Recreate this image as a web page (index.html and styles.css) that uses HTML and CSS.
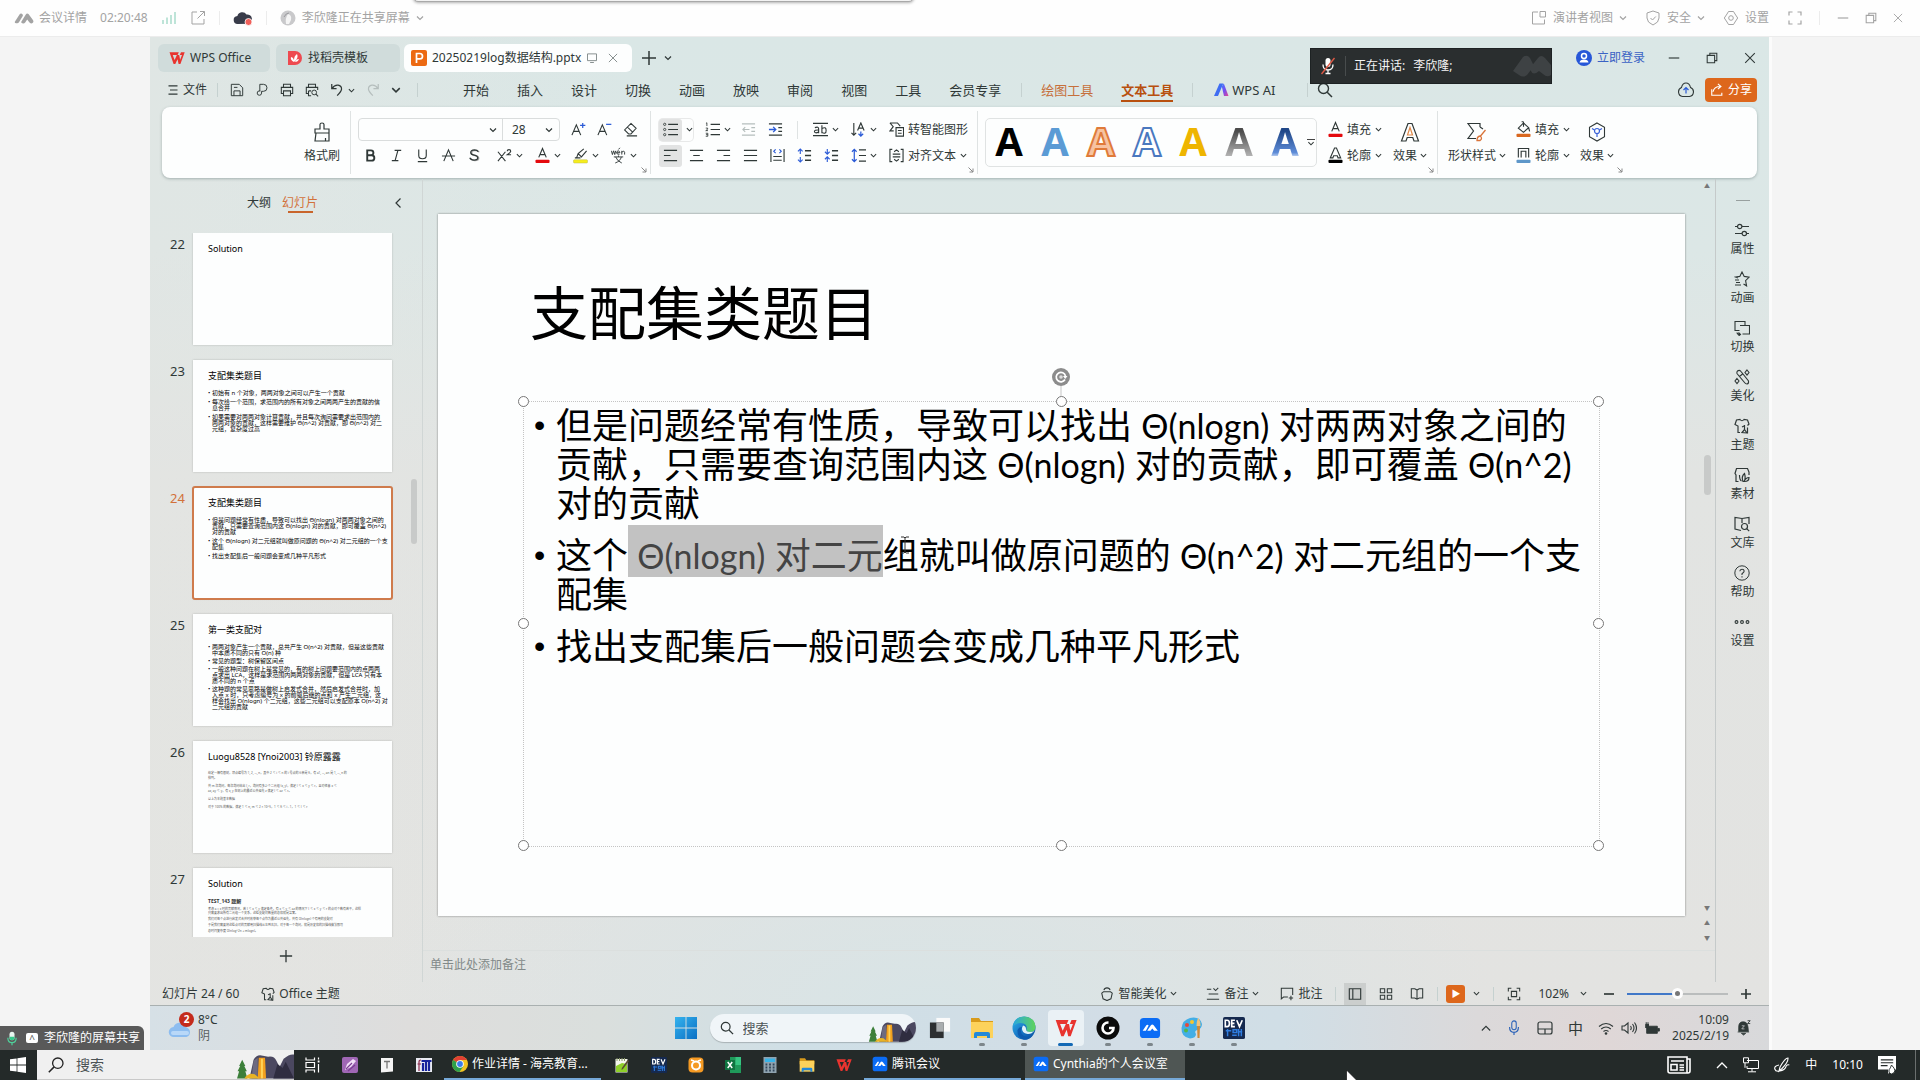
FILE: index.html
```html
<!DOCTYPE html>
<html lang="zh-CN">
<head>
  <meta charset="UTF-8">
  <meta name="viewport" content="width=device-width, initial-scale=1.0">
  <title>会议详情</title>
  <link rel="stylesheet" href="styles.css">
</head>
<body>

<!-- Icon sprite -->
<svg class="sprite" aria-hidden="true">
  <defs>
    <linearGradient id="g-edge" x1="0" y1="0" x2="1" y2="1"><stop offset="0" stop-color="#2fb4e8"/><stop offset=".5" stop-color="#1878c8"/><stop offset="1" stop-color="#0b4f9e"/></linearGradient>
    <linearGradient id="g-edge2" x1="0" y1="0" x2="1" y2="0"><stop offset="0" stop-color="#2aa7df"/><stop offset="1" stop-color="#5fd45a"/></linearGradient>
    <linearGradient id="g-ai" x1="0" y1="0" x2="1" y2="1"><stop offset="0" stop-color="#3b7bff"/><stop offset=".5" stop-color="#7a4cf0"/><stop offset="1" stop-color="#e5488e"/></linearGradient>
    <linearGradient id="g-win" x1="0" y1="0" x2="1" y2="1"><stop offset="0" stop-color="#35b3ee"/><stop offset="1" stop-color="#0a6fc4"/></linearGradient>
  </defs>
  <symbol id="chev" viewBox="0 0 8 8"><path d="M1 2.500l3 3 3-3" fill="none" stroke="currentColor" stroke-width="1.200"/></symbol>
  <symbol id="chev-left" viewBox="0 0 12 12"><path d="M8.500 1.500L4 6l4.500 4.500" fill="none" stroke="currentColor" stroke-width="1.200"/></symbol>
  <symbol id="chev-up" viewBox="0 0 12 8"><path d="M1 7l5-5 5 5" fill="none" stroke="currentColor" stroke-width="1.300"/></symbol>
  <symbol id="corner" viewBox="0 0 6 6"><path d="M.5.5L5 5M5 1.500V5H1.500" fill="none" stroke="currentColor"/></symbol>
  <symbol id="minus" viewBox="0 0 16 16"><path d="M2 8h12" stroke="currentColor" stroke-width="1.300"/></symbol>
  <symbol id="minus-b" viewBox="0 0 12 12"><path d="M0 6h12" stroke="currentColor" stroke-width="2"/></symbol>
  <symbol id="plus-b" viewBox="0 0 12 12"><path d="M0 6h12M6 0v12" stroke="currentColor" stroke-width="2"/></symbol>
  <symbol id="restore" viewBox="0 0 16 16"><path d="M2.500 5h8.500v8.500H2.500zM5.500 5V2.500h8V11H11" fill="none" stroke="currentColor" stroke-width="1.200"/></symbol>
  <symbol id="close" viewBox="0 0 16 16"><path d="M2.500 2.500l11 11M13.500 2.500l-11 11" stroke="currentColor" stroke-width="1.200"/></symbol>
  <symbol id="plus" viewBox="0 0 16 16"><path d="M8 1v14M1 8h14" stroke="currentColor" stroke-width="1.500"/></symbol>
  <symbol id="search" viewBox="0 0 16 16"><circle cx="6.500" cy="6.500" r="5" fill="none" stroke="currentColor" stroke-width="1.400"/><path d="M10.200 10.200L15 15" stroke="currentColor" stroke-width="1.500"/></symbol>
  <symbol id="search-l" viewBox="0 0 16 16"><circle cx="9.800" cy="6.200" r="5.200" fill="none" stroke="currentColor" stroke-width="1.300"/><path d="M6.100 9.900L.8 15.200" stroke="currentColor" stroke-width="1.500"/></symbol>

  <symbol id="meet" viewBox="0 0 20 14"><path d="M1 10.500l4.500-7q1-1.600 2.400-.8 1.600 1 .7 2.600L5 11.300Q4 12.800 2.200 12.200.2 11.800 1 10.500zM7.300 10.800l4.500-7.300q1-1.500 2.700-.5l4.600 6.300q1 2.200-1 3-2 .5-3-1.200l-1.900-2.700-2 3q-1.100 1.600-2.800.9-1.600-.7-1.100-1.500z" fill="currentColor"/></symbol>
  <symbol id="meet-solid" viewBox="0 0 40 28"><path d="M2 19L12 5q4-3 7 1l4 8-7 9q-4 3-8 0zM19 16L27 6q3-4 7 0l6 7v10q-4 3-8-1l-4-3q-6 5-8 0z" fill="currentColor"/></symbol>
  <symbol id="signal" viewBox="0 0 16 16"><path d="M2 10v4M6 7.500V14M10 5v9M14 2v12" stroke="#a9dccb" stroke-width="1.500"/></symbol>
  <symbol id="openout" viewBox="0 0 16 16"><path d="M7 2H2v12h12V9M10 1.500h4.500V6M14.300 1.700L7.500 8.500" fill="none" stroke="currentColor"/></symbol>
  <symbol id="cloudrec" viewBox="0 0 20 16"><path d="M5 14a4 4 0 0 1-.6-8A5 5 0 0 1 13.500 4.500 4.500 4.500 0 0 1 15 13.800z" fill="#383b49"/><circle cx="15.500" cy="12" r="3.500" fill="#f0605a" stroke="#fff" stroke-width=".8"/></symbol>
  <symbol id="avatar-g" viewBox="0 0 16 16"><circle cx="8" cy="8" r="7.500" fill="#c9c9cb"/><path d="M6 14q-1-6 2-10 4 1 3 6l-2 4z" fill="#f5f5f5"/><path d="M4 7q2-4 5-4" stroke="#9a9a9e" fill="none"/></symbol>
  <symbol id="speaker-view" viewBox="0 0 16 16"><path d="M7 2H1.500v12h12V9.500M9 1.500h5.500v5.500H9z" fill="none" stroke="currentColor"/></symbol>
  <symbol id="shield" viewBox="0 0 16 16"><path d="M8 1l6 2v5q0 4.500-6 7-6-2.500-6-7V3z" fill="none" stroke="currentColor"/><path d="M5.500 8L7.500 10l3.300-3.500" fill="none" stroke="currentColor"/></symbol>
  <symbol id="gear" viewBox="0 0 16 16"><path d="M5.500 1.500h5L12 4l2.700 4L12 12l-1.500 2.500h-5L4 12 1.300 8 4 4z" fill="none" stroke="currentColor" stroke-linejoin="round"/><circle cx="8" cy="8" r="2.300" fill="none" stroke="currentColor"/></symbol>
  <symbol id="full" viewBox="0 0 16 16"><path d="M2 5.500V2h3.500M10.500 2H14v3.500M14 10.500V14h-3.500M5.500 14H2v-3.500" fill="none" stroke="currentColor" stroke-width="1.200"/></symbol>

  <symbol id="wps" viewBox="0 0 16 14"><path d="M.5 1.200h9.300L8.600 4.100H3.700L5.600 9l2.300-5h2.300l.9 4.800L13 4.100h-2.200l1.200-2.900h3.700L11.400 13H9.600L8.500 8.300 6.300 13H4.600z" fill="#e8342f"/></symbol>
  <symbol id="docer" viewBox="0 0 16 16"><path d="M1 1h7a7 7 0 0 1 0 14H1z" fill="#ee4a50"/><path d="M7 12q-4-2-3-5 2 0 3 3 0-4 3-6 2 4-3 8zm1 0q1-3 4-3-1 3-4 3z" fill="#fff"/></symbol>
  <symbol id="ppt" viewBox="0 0 16 16"><rect width="16" height="16" rx="2" fill="#ec6a13"/><path d="M5.500 13V3.500h3.300a2.700 2.700 0 0 1 0 5.400H5.500" fill="none" stroke="#fff" stroke-width="1.700"/></symbol>
  <symbol id="monitor" viewBox="0 0 16 16"><path d="M2 2.500h12v9H2zM5.500 14h5" fill="none" stroke="currentColor" stroke-width="1.200"/></symbol>
  <symbol id="menu" viewBox="0 0 16 16"><path d="M2 2.500h12M4 8h10M2 13.500h12" stroke="currentColor" stroke-width="1.500"/></symbol>
  <symbol id="save" viewBox="0 0 16 16"><path d="M1.500 1.500h9l4 4v9h-13zM4.500 14.500V9h7v5.500M4.500 5h4" fill="none" stroke="currentColor" stroke-width="1.100"/></symbol>
  <symbol id="export" viewBox="0 0 16 16"><path d="M5.500 9.500V1.500h4.200a4 4 0 0 1 0 8H7.500v2a2.500 2.500 0 1 1-2.500-2.500h1" fill="none" stroke="currentColor" stroke-width="1.100"/></symbol>
  <symbol id="print" viewBox="0 0 16 16"><path d="M4 5V1.500h8V5M4 12H1.500V5h13v7H12M4 9h8v5.500H4z" fill="none" stroke="currentColor" stroke-width="1.200"/></symbol>
  <symbol id="preview" viewBox="0 0 16 16"><path d="M4 5V1.500h8V5M4 12H1.500V5h13v3M4 9h3M4 9v5.500h3" fill="none" stroke="currentColor" stroke-width="1.200"/><circle cx="10.500" cy="10.800" r="2.700" fill="none" stroke="currentColor" stroke-width="1.100"/><path d="M12.500 12.800l2.500 2.500" stroke="currentColor" stroke-width="1.200"/></symbol>
  <symbol id="undo" viewBox="0 0 16 16"><path d="M2 1v5.500h5.500M2.500 6.200Q5 2 9.300 2.500q4 .8 3.900 4.500-.2 2.500-5 7.500" fill="none" stroke="currentColor" stroke-width="1.400"/></symbol>
  <symbol id="redo" viewBox="0 0 16 16"><path d="M14 1v5.500H8.500M13.500 6.200Q11 2 6.700 2.500q-4 .8-3.900 4.500.2 2.500 5 7.500" fill="none" stroke="currentColor" stroke-width="1.400"/></symbol>
  <symbol id="ai" viewBox="0 0 16 16"><path d="M6.500 1.500h3.800L5 14H1z" fill="#3f6df2"/><path d="M8.800 4.500l2-3 4.700 12.500H11z" fill="url(#g-ai)"/></symbol>
  <symbol id="cloudup" viewBox="0 0 16 16"><path d="M3.500 5.500Q4.500 1 8 1t4.500 4.500a4.700 4.700 0 0 1-1 9h-7a4.700 4.700 0 0 1-1-9z" fill="none" stroke="currentColor" stroke-width="1.100"/><path d="M8 11.500V5.500M5.500 8L8 5.500 10.500 8" fill="none" stroke="#2b5bd7" stroke-width="1.200"/></symbol>
  <symbol id="share" viewBox="0 0 16 16"><path d="M2 7v7h11.500v-3M3.500 10q1-6 8-6M9 1l3.500 3L9 7" fill="none" stroke="currentColor" stroke-width="1.300"/></symbol>
  <symbol id="user" viewBox="0 0 16 16"><circle cx="8" cy="8" r="8" fill="#2757d8"/><circle cx="8" cy="6" r="2.500" fill="none" stroke="#fff" stroke-width="1.500"/><path d="M3.500 12.500Q4 9.500 8 9.500t4.500 3z" fill="#fff"/></symbol>
  <symbol id="cube" viewBox="0 0 18 20"><path d="M9 1l7.500 4.300v9.400L9 19l-7.500-4.300V5.300z" fill="none" stroke="currentColor" stroke-width="1.100"/><circle cx="9" cy="9" r="2.500" fill="none" stroke="#3a62d8" stroke-width="1.200"/><path d="M9 11.500V15M6.500 8L4 6.500M11.500 8L14 6.500" stroke="#3a62d8" stroke-width="1.200"/></symbol>
  <symbol id="micoff" viewBox="0 0 16 18"><rect x="5.500" y="1" width="5" height="9" rx="2.500" fill="#fff"/><path d="M3 7.500Q3 13 8 13t5-5.500M8 13v3.500M5.500 16.500h5" fill="none" stroke="#fff" stroke-width="1.300"/><path d="M14.500 1L1.500 17" stroke="#e05a46" stroke-width="1.300"/></symbol>

  <symbol id="painter" viewBox="0 0 20 20"><path d="M8 7V2.500q0-1.500 2-1.500t2 1.500V7h5v4H3V7zM4 11l-1 8h14V11M13.500 19v-3" fill="none" stroke="currentColor" stroke-width="1.200"/></symbol>
  <symbol id="a-plus" viewBox="0 0 16 16"><path d="M1 14L5.700 3 10.400 14M2.700 10h6" fill="none" stroke="currentColor" stroke-width="1.200"/><path d="M12.500 1v5.500M9.700 3.700h5.600" stroke="#2b5bd7" stroke-width="1.300"/></symbol>
  <symbol id="a-minus" viewBox="0 0 16 16"><path d="M1 14L5.700 3 10.400 14M2.700 10h6" fill="none" stroke="currentColor" stroke-width="1.200"/><path d="M9.700 2.500h5.600" stroke="#2b5bd7" stroke-width="1.300"/></symbol>
  <symbol id="eraser" viewBox="0 0 16 16"><path d="M8.500 1.500l5.500 5.200-5.500 6H6L1.700 8.500zM4 14.800h11M4.800 5.500L10 10.500" fill="none" stroke="currentColor" stroke-width="1.100"/></symbol>
  <symbol id="t-bold" viewBox="0 0 16 16"><path d="M4.500 2.500h4a2.600 2.600 0 0 1 0 5.200h-4zM4.500 7.700h4.700a2.900 2.900 0 0 1 0 5.800H4.500z" fill="none" stroke="currentColor" stroke-width="2"/></symbol>
  <symbol id="t-italic" viewBox="0 0 16 16"><path d="M6 2.500h7M3 13.500h7M9.500 2.500l-3 11" fill="none" stroke="currentColor" stroke-width="1.200"/></symbol>
  <symbol id="t-under" viewBox="0 0 16 16"><path d="M4 1.500V8q0 3.500 4 3.500T12 8V1.500M3 14.500h10" fill="none" stroke="currentColor" stroke-width="1.200"/></symbol>
  <symbol id="t-strike" viewBox="0 0 16 16"><path d="M3 14L8 2l5 12M1 8.500h14" fill="none" stroke="currentColor" stroke-width="1.200"/></symbol>
  <symbol id="t-shadow" viewBox="0 0 16 16"><path d="M13 4.500Q12 2.500 9 2.500 5 2.700 5 5.200 5 7.500 8.700 8T12.500 11q0 2.500-4 2.500Q5 13.500 4 11" fill="none" stroke="#aaa" stroke-width="1.500"/><path d="M12 4Q11 2 8 2 4 2.200 4 4.700 4 7 7.700 7.500T11.500 10.500q0 2.500-4 2.500Q4 13 3 10.500" fill="none" stroke="currentColor" stroke-width="1.400"/></symbol>
  <symbol id="t-super" viewBox="0 0 16 16"><path d="M1 4l8 10M9 4L1 14M11 3.500q0-1.800 1.800-1.800t1.800 1.700q0 1.200-3.600 3.800H15" fill="none" stroke="currentColor" stroke-width="1.200"/></symbol>
  <symbol id="t-color" viewBox="0 0 16 18"><path d="M4 11L8 1.500l4 9.500M5.200 8h5.600" fill="none" stroke="currentColor" stroke-width="1.200"/><rect x=".5" y="13.500" width="15" height="3.500" rx="1" fill="#e40a0e"/></symbol>
  <symbol id="t-outline" viewBox="0 0 16 18"><path d="M2.500 11.500L7 1h2l4.500 10.500h-2.800l-.8-2.200H6l-.8 2.200z" fill="none" stroke="currentColor" stroke-width="1.200"/><rect x=".5" y="13.500" width="15" height="3.500" rx="1" fill="#000"/></symbol>
  <symbol id="t-hl" viewBox="0 0 16 18"><path d="M4 11l1.500-4 6-5M5.500 7L9 10.500 14.500 4M2 11.500h6" fill="none" stroke="currentColor" stroke-width="1.200"/><rect x=".5" y="13.500" width="15" height="3.500" rx="1" fill="#f6ee1c" stroke="#b9b34a" stroke-width=".5"/></symbol>
  <symbol id="t-wen" viewBox="0 0 16 18"><path d="M.5 4l1 4 1.300-4L4 8l1-4M6 6h3.500Q9 4 7.700 4 6 4.200 6 6.200 6.200 8 9 7.700M11.500 8V4M11.500 5.500q2.500-2.500 3 0V8M8 2.500L9.500.8M3 10.500h10M8 9v1.500M4.500 17Q10 15 11 10.500M5 10.500Q6.500 15 11.500 17" fill="none" stroke="currentColor"/></symbol>
  <symbol id="list-b" viewBox="0 0 16 16"><path d="M5.500 2.500H16M5.500 8H16M5.500 13.500H16" stroke="currentColor" stroke-width="1.200"/><g fill="none" stroke="currentColor" stroke-width=".9"><circle cx="1.800" cy="2.500" r="1.200"/><circle cx="1.800" cy="8" r="1.200"/><circle cx="1.800" cy="13.500" r="1.200"/></g></symbol>
  <symbol id="list-n" viewBox="0 0 16 16"><path d="M6 2.500h10M6 8h10M6 13.500h10" stroke="currentColor" stroke-width="1.200"/><path d="M1 1.500L2 .8v3.500M.8 6.500h2v1.200l-2 1.500h2.400M.8 12h2.200v3.200H.8M1 13.500h2" fill="none" stroke="currentColor" stroke-width=".9"/></symbol>
  <symbol id="outdent" viewBox="0 0 16 16"><path d="M1 2h14M11 6h4M11 10h4M1 14h14" stroke="currentColor" stroke-width="1.100"/><path d="M9 8H2M4.500 5.500L2 8l2.500 2.500" fill="none" stroke="currentColor" stroke-width="1.200"/></symbol>
  <symbol id="indent" viewBox="0 0 16 16"><path d="M1 2h14M11 6h4M11 10h4M1 14h14" stroke="currentColor" stroke-width="1.200"/><path d="M1 8h7M5.500 5.200L8.300 8l-2.800 2.800" fill="none" stroke="#2b5bd7" stroke-width="1.400"/></symbol>
  <symbol id="ab" viewBox="0 0 16 16"><path d="M0 1.500h16M0 14.500h16M2 6q4-1.500 4 1.300V12M6 8.500Q1.500 8.300 1.500 10.300 2 12.500 6 10.800M9.500 3.500V12M9.500 7q4.500-2.500 4.500 2t-4.500 2.300" fill="none" stroke="currentColor" stroke-width="1.200"/></symbol>
  <symbol id="dir" viewBox="0 0 16 16"><path d="M3 1v13M.5 11.500L3 14l2.500-2.500M7 9l3.500-8L14 9M8 6.500h5" fill="none" stroke="currentColor" stroke-width="1.200"/><path d="M10.500 10v5M8 12.500l2.500 2.500 2.500-2.500" fill="none" stroke="#2b5bd7" stroke-width="1.300"/></symbol>
  <symbol id="smart" viewBox="0 0 16 16"><path d="M1 1h8l3 3.500M1 1l3.500 4L1 9.500h4M7.500 6h8v9h-8zM9.500 9h4M9.500 12h4" fill="none" stroke="currentColor" stroke-width="1.200"/></symbol>
  <symbol id="al" viewBox="0 0 16 16"><path d="M1 2.500h14M1 8h7M1 13.500h14" stroke="currentColor" stroke-width="1.200"/></symbol>
  <symbol id="ac" viewBox="0 0 16 16"><path d="M1 2.500h14M4.500 8h7M1 13.500h14" stroke="currentColor" stroke-width="1.200"/></symbol>
  <symbol id="ar" viewBox="0 0 16 16"><path d="M1 2.500h14M8 8h7M1 13.500h14" stroke="currentColor" stroke-width="1.200"/></symbol>
  <symbol id="aj" viewBox="0 0 16 16"><path d="M1 2.500h14M1 8h14M1 13.500h14" stroke="currentColor" stroke-width="1.200"/></symbol>
  <symbol id="dist" viewBox="0 0 16 16"><path d="M1 1v14M15 1v14M3.500 9h9M3.500 13h9" stroke="currentColor" stroke-width="1.200"/><path d="M6 1.500L4 3.500l2 2M10 1.500l2 2-2 2" fill="none" stroke="#2b5bd7" stroke-width="1.200"/></symbol>
  <symbol id="sp-up" viewBox="0 0 16 16"><path d="M8.500 3H15M8.500 8H15M8.500 13H15" stroke="currentColor" stroke-width="1.500"/><path d="M3.500 1.500v5M1 3.500L3.500 1 6 3.500M3.500 9.500v5M1 12.500L3.500 15 6 12.500" fill="none" stroke="#2b5bd7" stroke-width="1.200"/></symbol>
  <symbol id="sp-dn" viewBox="0 0 16 16"><path d="M8.500 3H15M8.500 8H15M8.500 13H15" stroke="currentColor" stroke-width="1.500"/><path d="M3.500 1v5M1 4l2.500 2.500L6 4M3.500 15v-5M1 12l2.500-2.500L6 12" fill="none" stroke="#2b5bd7" stroke-width="1.200"/></symbol>
  <symbol id="sp" viewBox="0 0 16 16"><path d="M8.500 2H16M8.500 8H16M8.500 14H16" stroke="currentColor" stroke-width="1.200"/><path d="M3.500 1.500v13M1 4l2.500-2.500L6 4M1 12l2.500 2.500L6 12" fill="none" stroke="#2b5bd7" stroke-width="1.300"/></symbol>
  <symbol id="valign" viewBox="0 0 16 16"><path d="M3.500 1.500H1v13h2.500M12.500 1.500H15v13h-2.500M4 6.500h8M4 9.500h8M5.500 4L8 2l2.500 2M5.500 12L8 14l2.500-2" fill="none" stroke="currentColor" stroke-width="1.200"/></symbol>
  <symbol id="fx-a" viewBox="0 0 20 20"><path d="M1.500 19L8 1.500h4L18.500 19H14l-1.200-3.500H7.200L6 19z" fill="none" stroke="currentColor" stroke-width="1.200"/><path d="M7.500 13L10 5.500l2.500 7.500z" fill="none" stroke="#e08a4a" stroke-width="1.200"/></symbol>
  <symbol id="shape-style" viewBox="0 0 20 20"><path d="M9 16.500H1L6.500 9 1 1.500h12V5M13 5l3 2" fill="none" stroke="currentColor" stroke-width="1.200"/><path d="M18.500 8l-5 6M10 18.500q0-4 3-4.500 3 2 0 4.500z" fill="none" stroke="#d9743a" stroke-width="1.300"/></symbol>
  <symbol id="bucket" viewBox="0 0 16 18"><path d="M8 2l5.500 5L8 12 2.500 7.500zM8 6V1.500Q8 .5 6 .7M13.500 7l1 4" fill="none" stroke="currentColor" stroke-width="1.200"/><rect x=".5" y="13.500" width="15" height="3.500" rx="1" fill="#d9671f"/></symbol>
  <symbol id="shape-line" viewBox="0 0 16 18"><path d="M2.500 11V1.500h11V11M5.500 11V4.500h5V11" fill="none" stroke="currentColor" stroke-width="1.200"/><rect x=".5" y="13.500" width="15" height="3.500" rx="1" fill="#5e97c9"/></symbol>

  <symbol id="s-prop" viewBox="0 0 16 16"><path d="M1 4.500h2.500M8 4.500h7M1 11.500h7M12.500 11.500H15" stroke="currentColor" stroke-width="1.200"/><circle cx="5.700" cy="4.500" r="2.200" fill="none" stroke="currentColor" stroke-width="1.200"/><circle cx="10.300" cy="11.500" r="2.200" fill="none" stroke="currentColor" stroke-width="1.200"/></symbol>
  <symbol id="s-anim" viewBox="0 0 16 16"><path d="M4 7L1.500 6l4.300-.6L8 1l2.200 4.400 5 .7-3.600 3.500 1 5.200L9.500 13M1 9h4M2 11.500h4M1 14h6" fill="none" stroke="currentColor" stroke-width="1.100"/></symbol>
  <symbol id="s-trans" viewBox="0 0 16 16"><path d="M5.500 10.500H1V1.500h10v3.500M6 5.500h9.500v8.500H8.500M3 12.500q0 2 3 2M4.500 12.500l2 2-2 1.500" fill="none" stroke="currentColor" stroke-width="1.100"/></symbol>
  <symbol id="s-wand" viewBox="0 0 16 16"><path d="M3.500 2Q5.500.5 7 2.500l7.500 9.500q.5 2.500-1.500 3-1.500 0-2.500-1.500L3 4.500Q2.500 3 3.500 2zM5.500 7.500L8.500 5" fill="none" stroke="currentColor" stroke-width="1.100"/><path d="M13 1l2 2.500-2 2.500-2-2.500zM3 9.500L5 12l-2 2.500L1 12z" fill="none" stroke="currentColor" stroke-width="1.100"/></symbol>
  <symbol id="s-theme" viewBox="0 0 16 16"><path d="M6 14.500H4V8L1 6.500 2.500 2 6 1.500q2 2.500 4 0L13.500 2 15 6l-1.500 1.500M10.500 7v5M8 9l2-1M13 15l-5-.5 2.500-3z" fill="none" stroke="currentColor" stroke-width="1.200"/><path d="M13.500 9.500v5.500" stroke="currentColor" stroke-width="1.200"/></symbol>
  <symbol id="s-mat" viewBox="0 0 16 16"><path d="M4.500 14.500H2V8L1 6.500 2.500 1.500h11L15 5v3M5.500 8q0 5 2 6M9 14.500q-2-5 1.500-8 1.500 5-.5 8q2-4 5-4 0 4-4.500 4z" fill="none" stroke="currentColor" stroke-width="1.200"/></symbol>
  <symbol id="s-lib" viewBox="0 0 16 16"><path d="M7 14.500L1 13V1.500l7 1 7-1V8M8 2.500V7" fill="none" stroke="currentColor" stroke-width="1.200"/><circle cx="10.500" cy="10.500" r="3" fill="none" stroke="currentColor" stroke-width="1.200"/><path d="M12.700 12.700l2.500 2.500" stroke="currentColor" stroke-width="1.200"/></symbol>
  <symbol id="s-help" viewBox="0 0 16 16"><circle cx="8" cy="8" r="7.200" fill="none" stroke="currentColor"/><path d="M5.800 6.300Q6 4.200 8 4.200t2.200 1.900Q10.200 7.200 8 8.700V10M8 11.200v1.300" fill="none" stroke="currentColor" stroke-width="1.100"/></symbol>
  <symbol id="s-more" viewBox="0 0 16 16"><g fill="none" stroke="currentColor" stroke-width="1.100"><circle cx="2.500" cy="8" r="1.400"/><circle cx="8" cy="8" r="1.400"/><circle cx="13.500" cy="8" r="1.400"/></g></symbol>

  <symbol id="b-smart" viewBox="0 0 16 16"><path d="M4 5.500h8l2 1.500-1.500 6.500-4.500 2-4.500-2L2 7zM4.500 3.500Q5 1 8 1t3.500 2.500" fill="none" stroke="currentColor" stroke-width="1.200"/></symbol>
  <symbol id="b-note" viewBox="0 0 16 16"><path d="M1 2.500h5M3 8h11M1 14h14M8.500 1.500l2.500 2.500 3-3" fill="none" stroke="currentColor" stroke-width="1.200"/></symbol>
  <symbol id="b-comment" viewBox="0 0 16 16"><path d="M14.500 9V1.500h-13v12L4 11.500h5M12.500 10v5M10 12.500h5" fill="none" stroke="currentColor" stroke-width="1.200"/></symbol>
  <symbol id="v-normal" viewBox="0 0 16 16"><path d="M1.500 2h13v12h-13zM5.500 2v12" fill="none" stroke="currentColor" stroke-width="1.300"/></symbol>
  <symbol id="v-grid" viewBox="0 0 16 16"><path d="M1.500 2h5v4.500h-5zM9.500 2h5v4.500h-5zM1.500 9.500h5V14h-5zM9.500 9.500h5V14h-5z" fill="none" stroke="currentColor" stroke-width="1.200"/></symbol>
  <symbol id="v-read" viewBox="0 0 16 16"><path d="M8 3.500L5.500 2h-4v10.500h4L8 14l2.500-1.500h4V2h-4zV14" fill="none" stroke="currentColor" stroke-width="1.200"/></symbol>
  <symbol id="v-fit" viewBox="0 0 16 16"><path d="M1.500 5V1.500H5M11 1.500h3.500V5M14.500 11v3.500H11M5 14.500H1.500V11M5 5h6v6H5z" fill="none" stroke="currentColor" stroke-width="1.200"/></symbol>

  <symbol id="weather" viewBox="0 0 24 18"><path d="M6 17a5 5 0 0 1-.5-10A7 7 0 0 1 18.500 7.500 5 5 0 0 1 18.500 17z" fill="#8dbdf0"/><path d="M5 13h14" stroke="#b9d8f8" stroke-width="4" stroke-linecap="round"/></symbol>
  <symbol id="win11" viewBox="0 0 24 24"><path d="M0 0h11.500v11.500H0zM12.500 0H24v11.500H12.500zM0 12.500h11.500V24H0zM12.500 12.500H24V24H12.500z" fill="url(#g-win)"/></symbol>
  <symbol id="scene" viewBox="0 0 56 24"><path d="M13 24L17 6q3-6 9-4l5 1q6-1 8 4l3 6 4-8q6-5 10-4v23z" fill="#4b4860"/><path d="M36 24l4-14 5 4 3-6 8 16z" fill="#2f2d40"/><path d="M17 7l4-3v20h-6z" fill="#6d6a80"/><path d="M22 4h6l1 20h-8z" fill="#f2a01e"/><path d="M24 5h2v19h-2z" fill="#ffd257"/><path d="M1 24l2-7H1.500L4 12H3l3-6 3 6H8l2.500 5H9l2 7z" fill="#3c7f3a"/><path d="M8 24q4-6 10-4l5 4z" fill="#e8b326"/></symbol>
  <symbol id="tv11" viewBox="0 0 24 24"><path d="M8 1h15v15H8z" fill="#fafafa"/><path d="M1 6h15v17H1z" fill="#2c2f31"/><path d="M8 6h8v10H8z" fill="#a9adaf"/></symbol>
  <symbol id="folder" viewBox="0 0 24 24"><path d="M1 2h8l2 3h12v6H1z" fill="#d89b1c"/><path d="M1 6h22v16H1z" fill="#fdd25b"/><path d="M4 22v-4q0-2 2-2h12q2 0 2 2v4h-3v-2H7v2z" fill="#2489d8"/></symbol>
  <symbol id="edge" viewBox="0 0 24 24"><circle cx="12" cy="12" r="11.500" fill="url(#g-edge)"/><path d="M1 10Q3 .5 12.500.5 23 1.500 23.500 11q0 5-5.500 5-4 0-3.500-3 1-4-3-5.500Q6 6 1 10z" fill="url(#g-edge2)"/><path d="M10 11q-3 6 2 9 5 2 9-1-4 6-10 4.500Q5 21 5.500 14 7 10.500 10 11z" fill="#0d5cb0"/><path d="M11 9.500q3 .5 3 3.500 0 3 4 3 3 0 4.500-1.500-3 4-7 3.500-6-1-5.500-6z" fill="#dff1f8"/></symbol>
  <symbol id="logi" viewBox="0 0 24 24"><circle cx="12" cy="12" r="11.500" fill="#0b0b0b"/><path d="M12.500 6.500H12a5.500 5.500 0 1 0 5.500 5.500H13" fill="none" stroke="#fff" stroke-width="2.600"/></symbol>
  <symbol id="tmeet" viewBox="0 0 24 24"><rect x="1" y="1" width="22" height="22" rx="4" fill="#0b6cf5"/><path d="M4 15l4-6q1.500-1.500 2.500.3L7.500 15zM9 15l4-6q1.500-1.500 3 0l4.500 6h-4L14.500 12.500 12.500 15z" fill="#fff"/></symbol>
  <symbol id="paint" viewBox="0 0 24 24"><path d="M10 2Q20 0 22 8q0 5-5 6-3 1-1 4 0 4-6 4.500Q1 21 1.500 12 2.500 4 10 2z" fill="#43aee6"/><circle cx="7" cy="9" r="2" fill="#e4483b"/><circle cx="12" cy="6" r="2" fill="#f7c62d"/><circle cx="6" cy="14.500" r="2" fill="#53b748"/><path d="M17 9h3l-.5 13h-2z" fill="#cf8a3a"/><path d="M16.500 10q0-6 2-8 2 3 2 8z" fill="#f0c27b"/></symbol>
  <symbol id="dev" viewBox="0 0 24 24"><rect width="24" height="24" rx="2" fill="#15294f"/><path d="M2.500 10.500V3.500h2q2.500 0 2.500 3.500t-2.500 3.500zM13 3.500H9.500v7H13M9.500 7h3M15 3.500l3 7 3-7" fill="none" stroke="#fff" stroke-width="1.800"/><path d="M3 15h6M5 13v8M11 14h4v3h-4zM10 20h5M17 13v8M17 16h4M20 13v8" fill="none" stroke="#2f7de0" stroke-width="1.600"/></symbol>
  <symbol id="mic" viewBox="0 0 12 18"><rect x="3.500" y="1" width="5" height="10" rx="2.500" fill="none" stroke="currentColor" stroke-width="1.200"/><path d="M1 8q0 6 5 6t5-6M6 14v3" fill="none" stroke="currentColor" stroke-width="1.300"/></symbol>
  <symbol id="mic-on" viewBox="0 0 12 18"><rect x="3" y="1" width="6" height="10" rx="3" fill="#e8f5ef"/><path d="M3 7h6v1a3 3 0 0 1-6 0z" fill="#35c98a"/><path d="M1 8q0 6 5 6t5-6M6 14v3" fill="none" stroke="#4fcf9a" stroke-width="1.500"/></symbol>
  <symbol id="touchpad" viewBox="0 0 16 16"><rect x="1" y="2" width="14" height="12" rx="2" fill="none" stroke="currentColor" stroke-width="1.200"/><path d="M1 9h14M8 9v5" stroke="currentColor" stroke-width="1.200"/></symbol>
  <symbol id="wifi" viewBox="0 0 16 16"><path d="M1 6.500q7-6 14 0M3.200 9q4.800-4 9.600 0M5.500 11.500q2.500-2 5 0" fill="none" stroke="currentColor" stroke-width="1.200"/><circle cx="8" cy="13.500" r="1.300" fill="currentColor"/></symbol>
  <symbol id="vol" viewBox="0 0 16 16"><path d="M1 6h2.500L7 3v10l-3.500-3H1zM9.500 6q1.500 2 0 4M11.500 4q3 4 0 8M13.500 2.500q4 5.500 0 11" fill="none" stroke="currentColor" stroke-width="1.100"/></symbol>
  <symbol id="batt" viewBox="0 0 18 16"><path d="M3 6h12v8H3zM15.500 8.500h1.800v3h-1.800z" fill="currentColor" stroke="currentColor"/><path d="M2 8V4h3v4M2.500 4V1.500M4.500 4V1.500" fill="currentColor" stroke="currentColor" stroke-width="1.200"/></symbol>
  <symbol id="bell" viewBox="0 0 16 18"><path d="M7 2q5 0 5.500 6l.5 5H2V8Q2 2 7 2zM5 15h5l-2.500 2zM.8 13.500h13" fill="currentColor" stroke="currentColor" stroke-width=".8"/><path d="M5.500 6.500h3L5.500 10h3" fill="none" stroke="#d5d5d8" stroke-width=".8"/><path d="M12 .8h3L12 4h3" fill="none" stroke="currentColor"/></symbol>

  <symbol id="win10" viewBox="0 0 16 16"><path d="M0 2.300L6.600 1.400v6.200H0zM7.400 1.300L16 0v7.600H7.400zM0 8.400h6.600v6.200L0 13.700zM7.400 8.400H16V16l-8.600-1.200z" fill="#fff"/></symbol>
  <symbol id="tv10" viewBox="0 0 16 16"><path d="M1 .5V3h8.500V.5M1 15.500V13h8.500v2.500M1 5.500h8.500v5H1zM13.500.5v2M13.500 7v8.500" fill="none" stroke="#fff" stroke-width="1.200"/><path d="M12.700 3.500h1.800v2h-1.800z" fill="#fff"/></symbol>
  <symbol id="pen" viewBox="0 0 16 16"><rect width="16" height="16" rx="2" fill="#a067b5"/><path d="M3 13l2-6 6-5 3 2-5 6z" fill="#f2dff7"/><path d="M4 12l6-6M6 14l7-6" stroke="#7c3d94" stroke-width="1.200"/></symbol>
  <symbol id="typora" viewBox="0 0 16 16"><path d="M2 1h12v13.500L2 15.500z" fill="#f5f5f5"/><path d="M5 4.500h6M8 4.500v7" stroke="#777" stroke-width="1.300"/></symbol>
  <symbol id="ft" viewBox="0 0 16 16"><rect y="1" width="16" height="14" fill="#e9ebf2"/><path d="M3 14V5q0-2 2-2M1.500 7H5" fill="none" stroke="#8b2b4b" stroke-width="1.200"/><path d="M5.500 4H15.500M10 4V14M7 6v8M13 4v10" fill="none" stroke="#16249c" stroke-width="2.200"/></symbol>
  <symbol id="chrome" viewBox="0 0 16 16"><circle cx="8" cy="8" r="8" fill="#f3c423"/><path d="M8 8L1.100 4A8 8 0 0 1 15 4H8z" fill="#e14033"/><path d="M1.100 4A8 8 0 0 0 7.500 16L11.500 10 8 8z" fill="#2ea04c"/><circle cx="8" cy="8" r="3.800" fill="#fff"/><circle cx="8" cy="8" r="2.900" fill="#3b7ded"/></symbol>
  <symbol id="npp" viewBox="0 0 16 16"><path d="M1.500 2h12v13.500h-12z" fill="#f4f6ec"/><path d="M2 9l6-3 5 1v8H2z" fill="#8fd02a"/><path d="M3 1v3M5.500 1v3M8 1v3M10.500 1v3" stroke="#8b9a6a"/><path d="M15 4l-6 8-1.500 1 .4-2L13.500 3z" fill="#5a4a33"/></symbol>
  <symbol id="orange" viewBox="0 0 16 16"><rect x=".5" y=".5" width="15" height="15" rx="4" fill="#f59a23"/><circle cx="8" cy="8.500" r="4" fill="none" stroke="#fff" stroke-width="2"/><path d="M3 3l3 1M13 3l-3 1" stroke="#fff" stroke-width="1.500"/></symbol>
  <symbol id="excel" viewBox="0 0 16 16"><path d="M5 0h11v16H5z" fill="#1f9a5a"/><path d="M10.500 0H16v8h-5.500z" fill="#36c481"/><rect y="3" width="10" height="10" fill="#0f7440"/><path d="M2.700 5l4.500 6M7.200 5l-4.500 6" stroke="#fff" stroke-width="1.500"/></symbol>
  <symbol id="calc" viewBox="0 0 16 16"><rect x="1.500" width="13" height="16" fill="#8fa3b0"/><path d="M3 1.500h10v3.500H3z" fill="#38b4e8"/><path d="M3.500 7.500h9M3.500 10.500h9M3.500 13.500h9" stroke="#33475a" stroke-width="1.800" stroke-dasharray="1.800 1.800"/></symbol>
  <symbol id="news" viewBox="0 0 24 20"><path d="M1 2h19v16H3q-2 0-2-2zM20 4h3v12q0 2-2 2h-2M4 6h13M4 9.500h6V15H4zM12.500 10h4.500M12.500 12.500h4.500M12.500 15h4.500" fill="none" stroke="#fff" stroke-width="1.600"/></symbol>
  <symbol id="net" viewBox="0 0 16 16"><path d="M4 3.500h11.500v8H4M9 11.500v3M5 14.800h8M4 9v2.500M.5.800h5v5h-5zM2 5.800v5" fill="none" stroke="#fff"/></symbol>
  <symbol id="ink" viewBox="0 0 16 16"><path d="M14 1q-3 0-8 9l-1 4 3-2.500Q14.500 5 14 1zM5 8Q0 9 .8 12t5 2q5-1 6-4t3.500-2" fill="none" stroke="#fff" stroke-width="1.100"/></symbol>
  <symbol id="notes" viewBox="0 0 16 16"><path d="M0 0h16v12h-4l-3 4v-4H0z" fill="#fff"/><path d="M2.500 3.500h11M2.500 6h11M2.500 8.500h6" stroke="#242a29" stroke-width="1.100"/><path d="M12 16q-3-1-2-4 1-1 2-4 3 3 3 5t-3 3z" fill="#fff" stroke="#242a29" stroke-width=".8"/></symbol>
  <symbol id="cursor" viewBox="0 0 12 18"><path d="M.5 0v16l3.800-3.500L6.500 18l3-1.200L7 11.500h5z" fill="#fff" stroke="#111" stroke-width=".7"/></symbol>
</svg>

<div class="page">
  <!-- Meeting title bar -->
  <header class="meeting-bar">
    <div class="popup-edge"></div>
    <div class="meeting-left">
      <svg class="i20"><use href="#meet"/></svg>
      <span class="meeting-name">会议详情</span>
      <span class="meeting-time">02:20:48</span>
      <svg class="i16"><use href="#signal"/></svg>
      <svg class="i16"><use href="#openout"/></svg>
      <i class="vline"></i>
      <svg class="i20"><use href="#cloudrec"/></svg>
      <i class="vline"></i>
      <span class="pair"><svg class="i16"><use href="#avatar-g"/></svg>李欣隆正在共享屏幕<svg class="i8"><use href="#chev"/></svg></span>
    </div>
    <div class="meeting-right">
      <button class="pair"><svg class="i16"><use href="#speaker-view"/></svg>演讲者视图<svg class="i8"><use href="#chev"/></svg></button>
      <button class="pair"><svg class="i16"><use href="#shield"/></svg>安全<svg class="i8"><use href="#chev"/></svg></button>
      <button class="pair"><svg class="i16"><use href="#gear"/></svg>设置</button>
      <button><svg class="i16"><use href="#full"/></svg></button>
      <i class="vline"></i>
      <div class="win-controls">
        <button><svg class="i14"><use href="#minus"/></svg></button>
        <button><svg class="i14"><use href="#restore"/></svg></button>
        <button><svg class="i12"><use href="#close"/></svg></button>
      </div>
    </div>
  </header>

  <main class="meeting-body">
    <div class="shared-label">
      <svg class="label-mic"><use href="#mic-on"/></svg>
      <span class="label-screen">^</span>
      李欣隆的屏幕共享
    </div>

    <section class="shared">
      <div class="speaking">
        <svg class="i18"><use href="#micoff"/></svg>
        <i></i>
        <span>正在讲话:</span><span>李欣隆;</span>
        <svg class="speaking-logo"><use href="#meet-solid"/></svg>
      </div>

      <!-- WPS window -->
      <div class="wps">
        <div class="doc-tabs">
          <button class="doc-tab tab-home"><svg class="i16"><use href="#wps"/></svg>WPS Office</button>
          <button class="doc-tab tab-docer"><svg class="i16"><use href="#docer"/></svg>找稻壳模板</button>
          <button class="doc-tab tab-file"><svg class="i16"><use href="#ppt"/></svg>20250219log数据结构.pptx<svg class="i12 dim"><use href="#monitor"/></svg><svg class="i12 dim tab-close"><use href="#close"/></svg></button>
          <button class="tab-add"><svg class="i16"><use href="#plus"/></svg></button>
          <button><svg class="i8"><use href="#chev"/></svg></button>
          <div class="title-right">
            <a class="login" href="#"><svg class="i16"><use href="#user"/></svg>立即登录</a>
            <div class="wps-controls">
              <button><svg class="i14"><use href="#minus"/></svg></button>
              <button><svg class="i14"><use href="#restore"/></svg></button>
              <button><svg class="i14"><use href="#close"/></svg></button>
            </div>
          </div>
        </div>

        <nav class="menu-row">
          <button class="file-menu"><svg class="i12"><use href="#menu"/></svg>文件</button>
          <i class="vline"></i>
          <div class="quick">
            <button><svg class="i14"><use href="#save"/></svg></button>
            <button><svg class="i14"><use href="#export"/></svg></button>
            <button><svg class="i14"><use href="#print"/></svg></button>
            <button><svg class="i14"><use href="#preview"/></svg></button>
            <button class="split"><svg class="i14"><use href="#undo"/></svg><svg class="i6"><use href="#chev"/></svg></button>
            <button class="faint"><svg class="i14"><use href="#redo"/></svg></button>
            <button><svg class="i10"><use href="#chev"/></svg></button>
          </div>
          <i class="vline"></i>
          <div class="menus">
            <button>开始</button><button>插入</button><button>设计</button><button>切换</button><button>动画</button><button>放映</button><button>审阅</button><button>视图</button><button>工具</button><button>会员专享</button>
          </div>
          <i class="vline"></i>
          <div class="menus tool-menus"><button class="tool">绘图工具</button><button class="tool active">文本工具</button></div>
          <i class="vline"></i>
          <button class="wps-ai"><svg class="i16"><use href="#ai"/></svg>WPS AI</button>
          <i class="vline"></i>
          <button><svg class="i16"><use href="#search"/></svg></button>
          <div class="menu-right">
            <button><svg class="i16"><use href="#cloudup"/></svg></button>
            <button class="share"><svg class="i14"><use href="#share"/></svg>分享</button>
          </div>
        </nav>

        <!-- Ribbon -->
        <div class="ribbon">
          <div class="group g-paint">
            <button class="tall"><svg class="i20"><use href="#painter"/></svg><span>格式刷</span></button>
          </div>
          <div class="group g-font">
            <div class="row font-row">
              <div class="combo"><select class="font-name" aria-label="字体"><option></option></select><svg class="i8"><use href="#chev"/></svg><select class="font-size" aria-label="字号"><option>28</option></select><svg class="i8"><use href="#chev"/></svg></div>
              <button><svg class="i15"><use href="#a-plus"/></svg></button>
              <button><svg class="i15"><use href="#a-minus"/></svg></button>
              <button><svg class="i15"><use href="#eraser"/></svg></button>
            </div>
            <div class="row style-row">
              <div class="row marks">
                <button><svg class="i15"><use href="#t-bold"/></svg></button>
                <button><svg class="i15"><use href="#t-italic"/></svg></button>
                <button><svg class="i15"><use href="#t-under"/></svg></button>
                <button><svg class="i15"><use href="#t-strike"/></svg></button>
                <button><svg class="i15"><use href="#t-shadow"/></svg></button>
              </div>
              <button class="split"><svg class="i15"><use href="#t-super"/></svg><svg class="i6"><use href="#chev"/></svg></button>
              <button class="split"><svg class="i15 h17"><use href="#t-color"/></svg><svg class="i6"><use href="#chev"/></svg></button>
              <button class="split"><svg class="i15 h17"><use href="#t-hl"/></svg><svg class="i6"><use href="#chev"/></svg></button>
              <button class="split"><svg class="i15 h17"><use href="#t-wen"/></svg><svg class="i6"><use href="#chev"/></svg></button>
            </div>
            <svg class="corner"><use href="#corner"/></svg>
          </div>
          <div class="group g-para">
            <div class="row">
              <button class="split bullets"><span class="on"><svg class="i15"><use href="#list-b"/></svg></span><svg class="i6"><use href="#chev"/></svg></button>
              <button class="split"><svg class="i15"><use href="#list-n"/></svg><svg class="i6"><use href="#chev"/></svg></button>
              <button class="faint"><svg class="i15"><use href="#outdent"/></svg></button>
              <button><svg class="i15"><use href="#indent"/></svg></button>
              <i class="vline short"></i>
              <button class="split"><svg class="i15"><use href="#ab"/></svg><svg class="i6"><use href="#chev"/></svg></button>
              <button class="split"><svg class="i15"><use href="#dir"/></svg><svg class="i6"><use href="#chev"/></svg></button>
              <button class="split"><svg class="i15"><use href="#smart"/></svg>转智能图形</button>
            </div>
            <div class="row">
              <button class="on align-on"><svg class="i15"><use href="#al"/></svg></button>
              <button><svg class="i15"><use href="#ac"/></svg></button>
              <button><svg class="i15"><use href="#ar"/></svg></button>
              <button><svg class="i15"><use href="#aj"/></svg></button>
              <button><svg class="i15"><use href="#dist"/></svg></button>
              <button><svg class="i15"><use href="#sp-up"/></svg></button>
              <button><svg class="i15"><use href="#sp-dn"/></svg></button>
              <button class="split"><svg class="i15"><use href="#sp"/></svg><svg class="i6"><use href="#chev"/></svg></button>
              <button class="split"><svg class="i15"><use href="#valign"/></svg>对齐文本<svg class="i6"><use href="#chev"/></svg></button>
            </div>
            <svg class="corner"><use href="#corner"/></svg>
          </div>
          <div class="group g-art">
            <div class="gallery">
              <button class="art black">A</button><button class="art blue">A</button><button class="art peach">A</button><button class="art line">A</button><button class="art gold">A</button><button class="art gray">A</button><button class="art navy">A</button>
              <svg class="i8 gallery-more"><use href="#chev"/></svg>
            </div>
            <div class="stack">
              <button class="split"><svg class="i15 h17"><use href="#t-color"/></svg>填充<svg class="i6"><use href="#chev"/></svg></button>
              <button class="split"><svg class="i15 h17"><use href="#t-outline"/></svg>轮廓<svg class="i6"><use href="#chev"/></svg></button>
            </div>
            <button class="tall"><svg class="i20"><use href="#fx-a"/></svg><span>效果<svg class="i6"><use href="#chev"/></svg></span></button>
            <svg class="corner"><use href="#corner"/></svg>
          </div>
          <div class="group g-shape">
            <button class="tall"><svg class="i20"><use href="#shape-style"/></svg><span>形状样式<svg class="i6"><use href="#chev"/></svg></span></button>
            <div class="stack">
              <button class="split"><svg class="i15 h17"><use href="#bucket"/></svg>填充<svg class="i6"><use href="#chev"/></svg></button>
              <button class="split"><svg class="i15 h17"><use href="#shape-line"/></svg>轮廓<svg class="i6"><use href="#chev"/></svg></button>
            </div>
            <button class="tall"><svg class="i20"><use href="#cube"/></svg><span>效果<svg class="i6"><use href="#chev"/></svg></span></button>
            <svg class="corner"><use href="#corner"/></svg>
          </div>
        </div>

        <div class="workspace">
          <!-- Slide list -->
          <aside class="slides">
            <div class="slides-head">
              <button>大纲</button><button class="active">幻灯片</button>
              <button class="collapse"><svg class="i12"><use href="#chev-left"/></svg></button>
            </div>
            <div class="slides-list">
              <div class="slide-item"><span class="num">22</span><div class="thumb"><h3>Solution</h3></div></div>
              <div class="slide-item"><span class="num">23</span><div class="thumb"><h3>支配集类题目</h3>
                <ul>
                  <li>初始有 n 个对象，两两对象之间可以产生一个贡献</li>
                  <li>每次给一个范围，求范围内的所有对象之间两两产生的贡献的信<br>息合并</li>
                  <li>如果需要对两两对象计算贡献，并且每次询问需要求出范围内的<br>两两对象的贡献，这样需要维护 Θ(n^2) 对贡献，即 Θ(n^2) 对二<br>元组，复杂度过高</li>
                </ul></div></div>
              <div class="slide-item current"><span class="num">24</span><div class="thumb"><h3>支配集类题目</h3>
                <ul>
                  <li>但是问题经常有性质，导致可以找出 Θ(nlogn) 对两两对象之间的<br>贡献，只需要查询范围内这 Θ(nlogn) 对的贡献，即可覆盖 Θ(n^2)<br>对的贡献</li>
                  <li>这个 Θ(nlogn) 对二元组就叫做原问题的 Θ(n^2) 对二元组的一个支<br>配集</li>
                  <li>找出支配集后一般问题会变成几种平凡形式</li>
                </ul></div></div>
              <div class="slide-item"><span class="num">25</span><div class="thumb"><h3>第一类支配对</h3>
                <ul class="tight">
                  <li>两两对象产生一个贡献，总共产生 O(n^2) 对贡献，但是这些贡献<br>中本质不同的只有 O(n) 种</li>
                  <li>常见的题型：树保留区间点</li>
                  <li>一般这种问题在树上是常见的，有的树上问题要范围内的点两两<br>点求出 LCA，这样是求范围内两两对象的贡献，但是 LCA 只有本<br>质不同的 n 个点</li>
                  <li>这种题的常见思路是做树上启发式合并，然后启发式合并时，加<br>入点 x 时，只考虑编号为 x 的前驱后继的点和 x 产生二元组，这<br>样会找出 O(nlogn) 个二元组，这些二元组可以支配原本 O(n^2) 对<br>二元组的贡献</li>
                </ul></div></div>
              <div class="slide-item"><span class="num">26</span><div class="thumb"><h3>Luogu8528 [Ynoi2003] 铃原露露</h3>
                <div class="fine">
                  <p>给定一棵有根树，顶点编号为 1, 2, …, n，其中 2 ≤ i ≤ n 的 i 号点的父亲是 fi，有 a1, …, an 是 1, …, n 的<br>排列。</p>
                  <p>共 m 次询问，每次询问给出 l, r，询问有多少个二元组 (x, y)，满足 l ≤ x ≤ y ≤ r，且对任意 x ≤<br>ax, ay ≤ y，有 x, y 在树上的最近公共祖先 z 满足 l ≤ az ≤ r。</p>
                  <p>以上为本题基本数据</p>
                  <p>对于 100% 的数据，满足 1 ≤ n, m ≤ 2 × 10^5，1 ≤ fi ≤ i - 1，1 ≤ l ≤ r</p>
                </div></div></div>
              <div class="slide-item"><span class="num">27</span><div class="thumb"><h3>Solution</h3>
                <div class="fine dense">
                  <p class="fine-title">TEST_143 题解</p>
                  <p>考虑 a = x 时的贡献情况，若 l ≤ x ≤ y 满足条件，有 x ≤ y ≤ az 的情况下 l ≤ x ≤ y ≤ r 的点对个数有若干，这样<br>只需要求出所有二元组一个关系，这些支配对数量的总和就是答案。</p>
                  <p>我们对每个点进行启发式合并时枚举每个点作为最近公共祖先，共有 O(nlogn) 个有用的支配对</p>
                  <p>于是我们需要将这些点对的贡献用扫描线从左到右扫，对于每一个询问，就是历史和的扫描线做法即可</p>
                  <p>总时间复杂度 O(nlog^2n + mlogn)。</p>
                </div></div></div>
            </div>
            <button class="slide-add"><svg class="i14"><use href="#plus"/></svg></button>
            <div class="slides-scroll"></div>
          </aside>

          <!-- Stage -->
          <section class="editor">
            <div class="stage">
              <article class="slide">
                <h1>支配集类题目</h1>
                <div class="textbox">
                  <i class="handle tl"></i><i class="handle tc"></i><i class="handle tr"></i><i class="handle ml"></i><i class="handle mr"></i><i class="handle bl"></i><i class="handle bc"></i><i class="handle br"></i>
                  <svg class="rotate" viewBox="0 0 18 28"><path d="M9 18v10" stroke="#c6c6c6"/><circle cx="9" cy="9" r="9" fill="#8c8c8c"/><path d="M13 11.500A4.700 4.700 0 1 1 13.500 8" fill="none" stroke="#fff" stroke-width="1.700"/><path d="M11 8h4.500L13.200 11z" fill="#fff"/><circle cx="9" cy="9" r="1.800" fill="#ddd"/></svg>
                  <ul class="points">
                    <li><div>但是问题经常有性质，导致可以找出 <b>Θ(nlogn)</b> 对两两对象之间的<br>贡献，只需要查询范围内这 <b>Θ(nlogn)</b> 对的贡献，即可覆盖 <b>Θ(n^2)</b><br>对的贡献</div></li>
                    <li><div>这个<mark> <b>Θ(nlogn)</b> 对二元</mark>组就叫做原问题的 <b>Θ(n^2)</b> 对二元组的一个支<br>配集</div></li>
                    <li><div>找出支配集后一般问题会变成几种平凡形式</div></li>
                  </ul>
                  <svg class="ibeam" viewBox="0 0 10 18"><path d="M1 1h3l1 1 1-1h3M5 2v14M1 17h3l1-1 1 1h3" fill="none" stroke="#333"/></svg>
                </div>
              </article>
              <div class="v-scroll">
                <span>▲</span>
                <i></i>
                <span>▼</span><span>▲</span><span>▼</span>
              </div>
            </div>
            <div class="notes-pane">单击此处添加备注</div>
          </section>

          <aside class="side-tools">
            <i class="dash"></i>
            <button><svg class="i16"><use href="#s-prop"/></svg>属性</button>
            <button><svg class="i16"><use href="#s-anim"/></svg>动画</button>
            <button><svg class="i16"><use href="#s-trans"/></svg>切换</button>
            <button><svg class="i16"><use href="#s-wand"/></svg>美化</button>
            <button><svg class="i16"><use href="#s-theme"/></svg>主题</button>
            <button><svg class="i16"><use href="#s-mat"/></svg>素材</button>
            <button><svg class="i16"><use href="#s-lib"/></svg>文库</button>
            <button><svg class="i16"><use href="#s-help"/></svg>帮助</button>
            <button><svg class="i16"><use href="#s-more"/></svg>设置</button>
          </aside>
        </div>

        <footer class="status">
          <span>幻灯片 24 / 60</span>
          <button class="split theme"><svg class="i14"><use href="#s-theme"/></svg>Office 主题</button>
          <div class="status-right">
            <button class="split b-smart"><svg class="i14"><use href="#b-smart"/></svg>智能美化<svg class="i6"><use href="#chev"/></svg></button>
            <button class="split b-note"><svg class="i14"><use href="#b-note"/></svg>备注<svg class="i6"><use href="#chev"/></svg></button>
            <button class="split"><svg class="i14"><use href="#b-comment"/></svg>批注</button>
            <i class="vline"></i>
            <div class="views">
              <button class="view-on"><svg class="i14"><use href="#v-normal"/></svg></button>
              <button><svg class="i14"><use href="#v-grid"/></svg></button>
              <button><svg class="i14"><use href="#v-read"/></svg></button>
            </div>
            <i class="vline"></i>
            <div class="play-set"><button class="play">▶</button><svg class="i6"><use href="#chev"/></svg></div>
            <i class="vline"></i>
            <button><svg class="i14"><use href="#v-fit"/></svg></button>
            <button class="zoom-value">102%<svg class="i6"><use href="#chev"/></svg></button>
            <div class="zoom">
              <button><svg class="i10"><use href="#minus-b"/></svg></button>
              <input type="range" min="0" max="100" value="50" aria-label="缩放">
              <button><svg class="i10"><use href="#plus-b"/></svg></button>
            </div>
          </div>
        </footer>
      </div>

      <!-- Taskbar of the shared desktop -->
      <div class="bar11">
        <div class="weather">
          <svg><use href="#weather"/></svg><b>2</b>
          <div>8°C<br><span>阴</span></div>
        </div>
        <div class="apps">
          <button><svg class="i22"><use href="#win11"/></svg></button>
          <label class="search11"><svg class="i14"><use href="#search"/></svg><input type="text" placeholder="搜索"><svg class="scene"><use href="#scene"/></svg></label>
          <button><svg class="i22"><use href="#tv11"/></svg></button>
          <button class="run"><svg class="i24"><use href="#folder"/></svg></button>
          <button class="run"><svg class="i24"><use href="#edge"/></svg></button>
          <button class="run focus"><svg class="i22"><use href="#wps"/></svg></button>
          <button class="run"><svg class="i24"><use href="#logi"/></svg></button>
          <button class="run"><svg class="i22"><use href="#tmeet"/></svg></button>
          <button class="run"><svg class="i24"><use href="#paint"/></svg></button>
          <button class="run"><svg class="i22"><use href="#dev"/></svg></button>
        </div>
        <div class="tray11">
          <svg class="i10"><use href="#chev-up"/></svg>
          <svg class="i16 blue-mic"><use href="#mic"/></svg>
          <svg class="i16"><use href="#touchpad"/></svg>
          <span class="ime">中</span>
          <div class="net"><svg class="i16"><use href="#wifi"/></svg><svg class="i16"><use href="#vol"/></svg><svg class="i16"><use href="#batt"/></svg></div>
          <div class="clock">10:09<br>2025/2/19</div>
          <svg class="i16"><use href="#bell"/></svg>
        </div>
      </div>
    </section>
  </main>

  <!-- Local taskbar -->
  <footer class="bar10">
    <button class="start"><svg class="i16"><use href="#win10"/></svg></button>
    <label class="search10"><svg class="i16"><use href="#search-l"/></svg><input type="text" placeholder="搜索"><svg class="scene"><use href="#scene"/></svg></label>
    <button class="cell"><svg class="i16"><use href="#tv10"/></svg></button>
    <button class="cell"><svg class="i16"><use href="#pen"/></svg></button>
    <button class="cell"><svg class="i16"><use href="#typora"/></svg></button>
    <button class="cell"><svg class="i16"><use href="#ft"/></svg></button>
    <button class="task open"><svg class="i16"><use href="#chrome"/></svg>作业详情 - 海亮教育...</button>
    <button class="cell"><svg class="i16"><use href="#npp"/></svg></button>
    <button class="cell"><svg class="i16"><use href="#dev"/></svg></button>
    <button class="cell"><svg class="i16"><use href="#orange"/></svg></button>
    <button class="cell"><svg class="i16"><use href="#excel"/></svg></button>
    <button class="cell"><svg class="i16"><use href="#calc"/></svg></button>
    <button class="cell"><svg class="i16"><use href="#folder"/></svg></button>
    <button class="cell"><svg class="i16"><use href="#wps"/></svg></button>
    <button class="task open"><svg class="i16"><use href="#tmeet"/></svg>腾讯会议</button>
    <button class="task open current"><svg class="i16"><use href="#tmeet"/></svg>Cynthia的个人会议室</button>
    <div class="tray10">
      <svg class="i24"><use href="#news"/></svg>
      <svg class="i12"><use href="#chev-up"/></svg>
      <svg class="i16"><use href="#net"/></svg>
      <svg class="i16"><use href="#ink"/></svg>
      <span>中</span>
      <span>10:10</span>
      <svg class="i18"><use href="#notes"/></svg>
    </div>
    <svg class="cursor"><use href="#cursor"/></svg>
  </footer>
</div>
</body>
</html>
```
FILE: styles.css
```css
* {
  box-sizing: border-box;
}

body {
  margin: 0;
  font-family: "Noto Sans", "Noto Sans CJK SC", sans-serif;
  font-size: 12px;
  line-height: 16px;
  color: #2f3837;
  background: #f4f4f4;
}

button, input, select {
  font: inherit;
  color: inherit;
  background: none;
  border: 0;
  padding: 0;
  margin: 0;
}

button {
  display: flex;
  align-items: center;
  white-space: nowrap;
}

svg {
  display: block;
  flex: none;
}

.sprite {
  position: absolute;
  width: 0;
  height: 0;
}

/* icon sizes */
.i6 { width: 7px; height: 7px; }
.i8 { width: 8px; height: 8px; }
.i10 { width: 10px; height: 10px; }
.i12 { width: 12px; height: 12px; }
.i14 { width: 14px; height: 14px; }
.i15 { width: 15px; height: 15px; }
.i16 { width: 16px; height: 16px; }
.i18 { width: 18px; height: 18px; }
.i20 { width: 20px; height: 20px; }
.i22 { width: 22px; height: 22px; }
.i24 { width: 24px; height: 24px; }
.h17 { height: 17px; }

.page {
  height: 100vh;
  display: flex;
  flex-direction: column;
  overflow: hidden;
}

.vline {
  width: 1px;
  height: 14px;
  background: #c5d1d0;
}

/* meeting title bar */
.meeting-bar {
  position: relative;
  height: 37px;
  flex: none;
  display: flex;
  align-items: center;
  justify-content: space-between;
  padding: 0 16px 0 14px;
  background: #fefefe;
  border-bottom: 1px solid #ececec;
  color: #a3a3a3;
}

.popup-edge {
  position: absolute;
  top: -6px;
  left: 413px;
  width: 501px;
  height: 8px;
  background: #f3f3f3;
  border: 1px solid #a9a9a9;
  border-radius: 0 0 5px 5px;
  box-shadow: 0 1px 3px rgba(0,0,0,0.3);
}

.meeting-left, .meeting-right, .pair, .win-controls {
  display: flex;
  align-items: center;
}

.meeting-left {
  gap: 13px;
}

.meeting-left .vline, .meeting-right .vline {
  background: #ececec;
}

.meeting-right .vline {
  margin: 0 -2px;
}

.meeting-name {
  margin-left: -8px;
}

.pair {
  gap: 6px;
}

.meeting-right {
  gap: 18px;
}

.win-controls {
  gap: 14px;
}

/* body */
.meeting-body {
  position: relative;
  flex: 1;
  min-height: 0;
  display: flex;
  padding: 0 148px 0 150px;
}

.shared-label {
  position: absolute;
  left: 0;
  bottom: 0;
  height: 24px;
  display: flex;
  align-items: center;
  gap: 6px;
  padding: 0 4px 0 7px;
  background: #595959;
  border-radius: 0 6px 0 0;
  color: #fff;
}

.label-mic {
  width: 10px;
  height: 15px;
  margin-right: 3px;
}

.label-screen {
  width: 12px;
  height: 10px;
  line-height: 13px;
  font-size: 10px;
  text-align: center;
  background: #fff;
  color: #555;
  border-radius: 2px;
}

.shared {
  position: relative;
  flex: 1;
  min-width: 0;
  display: flex;
  flex-direction: column;
  border-right: 3px solid #fbfbfb;
}

.speaking {
  position: absolute;
  z-index: 2;
  top: 11px;
  right: 217px;
  width: 242px;
  height: 36px;
  display: flex;
  align-items: center;
  gap: 8px;
  padding-left: 8px;
  background: #2a2e2f;
  border: 1px solid #1d2223;
  color: #f5f5f5;
  overflow: hidden;
}

.speaking i {
  width: 1px;
  height: 20px;
  background: #484c4d;
}

.speaking-logo {
  width: 40px;
  height: 28px;
  margin-left: auto;
  color: #3e4244;
}

/* wps window */
.wps {
  flex: 1;
  min-height: 0;
  display: flex;
  flex-direction: column;
  padding-top: 7px;
  background:
    radial-gradient(ellipse 35% 25% at 48% 100%, #d8e4e6, transparent),
    linear-gradient(90deg, rgba(228,229,226,0.5), transparent 30%),
    linear-gradient(#dae7e6, #dce7e6 22%, #e2e4e2 45%, #e3e3e1);
}

.doc-tabs {
  height: 28px;
  flex: none;
  display: flex;
  align-items: center;
  gap: 6px;
  padding: 0 12px 0 8px;
}

.doc-tab {
  height: 28px;
  padding: 0 11px;
  gap: 5px;
  border-radius: 6px;
  background: #d0dcdb;
}

.tab-home { width: 112px; }
.tab-docer { width: 124px; }

.tab-file {
  width: 228px;
  padding: 0 7px;
  margin-left: -2px;
  background: #fdfefe;
}

.tab-close {
  margin-left: auto;
  margin-right: 6px;
}

.dim {
  color: #7c8584;
}

.tab-add {
  margin: 0 1px 0 3px;
}

.title-right {
  margin-left: auto;
  display: flex;
  align-items: center;
  gap: 28px;
}

.login {
  display: flex;
  align-items: center;
  gap: 5px;
  margin-right: -6px;
  color: #3a62c4;
  text-decoration: none;
}

.wps-controls {
  display: flex;
  gap: 24px;
}

.menu-row {
  height: 24px;
  flex: none;
  display: flex;
  align-items: center;
  margin-top: 6px;
  padding: 0 12px 0 17px;
  font-size: 13px;
}

.file-menu {
  gap: 4px;
  margin-right: 10px;
  font-size: 12px;
}

.quick {
  display: flex;
  align-items: center;
  gap: 11px;
  padding: 0 16px 0 12px;
}

.split {
  gap: 4px;
}

.faint {
  color: #b5bebd;
}

.menus {
  display: flex;
  gap: 28px;
  padding: 0 20px 0 45px;
}

.tool-menus {
  padding: 0 19px;
}

.tool {
  color: #c6703c;
}

.tool.active {
  font-weight: 700;
  color: #b8500f;
  height: 24px;
  padding-top: 2px;
  border-bottom: 2px solid #b8500f;
}

.wps-ai {
  gap: 3px;
  padding: 0 32px 0 20px;
}

.wps-ai + .vline {
  margin-right: 9px;
}

.menu-right {
  margin-left: auto;
  display: flex;
  align-items: center;
  gap: 11px;
}

.share {
  height: 24px;
  gap: 4px;
  padding: 0 5px;
  border-radius: 4px;
  background: #dd671c;
  color: #fff;
  font-size: 12px;
}

/* ribbon */
.ribbon {
  height: 71px;
  flex: none;
  display: flex;
  margin: 5px 12px 1px;
  background: #fdfefe;
  border-radius: 8px;
  box-shadow: 0 1px 3px rgba(90,110,110,0.45);
}

.group {
  position: relative;
  display: flex;
  flex-direction: column;
  justify-content: center;
  gap: 3px;
  margin: 4px 0;
  border-right: 1px solid #dfe3e3;
}

.group:last-child {
  border-right: 0;
}

.corner {
  position: absolute;
  right: 3px;
  bottom: 1px;
  width: 6px;
  height: 6px;
  color: #888;
}

.row {
  height: 23px;
  display: flex;
  align-items: center;
  gap: 12px;
}

.g-paint {
  width: 189px;
  align-items: flex-end;
  padding-right: 10px;
}

.tall {
  flex-direction: column;
  gap: 6px;
}

.tall span {
  display: flex;
  align-items: center;
  gap: 3px;
}

.g-font {
  width: 300px;
  padding-left: 7px;
}

.font-row {
  gap: 11px;
}

.combo {
  width: 202px;
  height: 23px;
  display: flex;
  align-items: center;
  padding-right: 6px;
  border: 1px solid #dadddd;
  border-radius: 4px;
}

.combo select {
  appearance: none;
  height: 21px;
  outline: none;
}

.font-name { width: 130px; }

.font-name + svg {
  margin-right: 5px;
}

.font-size {
  flex: 1;
  padding-left: 9px;
  border-left: 1px solid #dadddd;
}

.style-row {
  gap: 12px;
  padding-left: 5px;
}

.marks {
  gap: 11px;
  margin-right: 3px;
}

.g-para {
  width: 327px;
  padding: 0 0 0 8px;
}

.on {
  height: 22px;
  display: flex;
  align-items: center;
  padding: 0 4px;
  border-radius: 3px;
  background: #e2e3e3;
}

.bullets {
  border-radius: 4px;
  box-shadow: 0 0 0 1px #e8e9e9;
}

.bullets + .split {
  margin-right: -2px;
}

.align-on {
  margin-right: -5px;
}

.short {
  height: 18px;
  margin: 0 3px 0 2px;
  background: #dfe3e3;
}

.g-art, .g-shape {
  flex-direction: row;
  align-items: center;
  justify-content: flex-start;
}

.g-art {
  width: 460px;
  padding-left: 7px;
  gap: 11px;
}

.gallery {
  position: relative;
  width: 332px;
  height: 49px;
  display: flex;
  align-items: center;
  gap: 18px;
  padding-left: 9px;
  border: 1px solid #e0e3e3;
  border-radius: 5px;
}

.gallery-more {
  position: absolute;
  right: 1px;
  top: 20px;
  border-top: 1px solid #444;
}

.art {
  width: 28px;
  padding-bottom: 4px;
  justify-content: center;
  font: 700 40px/44px "Open Sans", sans-serif;
}

.black { color: #000; }
.blue { color: #5b9bd5; }
.gold { color: #eeb500; }

.peach {
  color: #f7c3a1;
  -webkit-text-stroke: 2px #e07b3a;
}

.line {
  color: #fff;
  -webkit-text-stroke: 2px #4a78bf;
}

.gray, .navy {
  background: linear-gradient(#4b4b4b 25%, #b9b9b9 80%);
  -webkit-background-clip: text;
  background-clip: text;
  color: transparent;
}

.navy {
  background-image: linear-gradient(#1f4788 25%, #5e8cd8 70%, #d5e2f5 80%);
}

.stack {
  display: flex;
  flex-direction: column;
  gap: 9px;
}

.g-shape {
  padding-left: 10px;
  gap: 10px;
  width: 188px;
}

/* workspace */
.workspace {
  flex: 1;
  min-height: 0;
  display: flex;
}

.slides {
  position: relative;
  width: 273px;
  flex: none;
  display: flex;
  flex-direction: column;
  border-right: 1px solid #d0d6d5;
}

.slides-head {
  display: flex;
  align-items: flex-start;
  gap: 11px;
  height: 54px;
  padding: 13px 18px 0 97px;
}

.slides-head button {
  height: 21px;
}

.slides-head .active {
  color: #d2713a;
  background: linear-gradient(#c9652c, #c9652c) center bottom / 25px 2px no-repeat;
}

.slides-head .collapse {
  margin-left: auto;
}

.slides-list {
  flex: 1;
  min-height: 0;
  overflow: hidden;
}

.slide-item {
  display: flex;
  align-items: flex-start;
  height: 127px;
  padding-left: 20px;
}

.num {
  width: 23px;
  padding-top: 3px;
  font-size: 13px;
}

.thumb {
  width: 199px;
  height: 112px;
  padding: 10px 0 0 15px;
  background: #fdfefe;
  box-shadow: 0 0 2px rgba(0,0,0,0.2);
  overflow: hidden;
  white-space: nowrap;
  color: #000;
}

.current .num {
  color: #d2713a;
}

.current .thumb {
  outline: 2px solid #cf7b4c;
  outline-offset: -1px;
  border-radius: 2px;
}

.thumb h3 {
  margin: 0 0 8px;
  font-size: 9px;
  line-height: 12px;
  font-weight: 400;
}

.thumb ul {
  margin: 0;
  padding: 0 0 0 4px;
  list-style: none;
  font-size: 6px;
  line-height: 6px;
}

.thumb li {
  position: relative;
  margin-bottom: 3px;
}

.thumb li::before {
  content: "•";
  position: absolute;
  left: -4px;
}

.thumb .tight li {
  margin-bottom: 2px;
}

.fine {
  font-size: 3px;
  line-height: 5px;
  color: #555;
}

.fine p {
  margin: 0 0 3px;
}

.dense {
  line-height: 4px;
}

.dense p {
  margin: 0 0 2px;
}

.dense .fine-title {
  margin-bottom: 3px;
  font-size: 5px;
  line-height: 6px;
  font-weight: 700;
  color: #333;
}

.slide-add {
  height: 45px;
  justify-content: center;
  padding: 0 0 8px;
}

.slides-scroll {
  position: absolute;
  top: 300px;
  right: 5px;
  width: 6px;
  height: 65px;
  border-radius: 3px;
  background: #c8cac9;
}

.editor {
  flex: 1;
  min-width: 0;
  display: flex;
  flex-direction: column;
}

.stage {
  position: relative;
  flex: 1;
  min-height: 0;
  display: flex;
  padding: 35px 30px 34px 15px;
}

.slide {
  flex: 1;
  display: flex;
  flex-direction: column;
  padding: 70px 85px 69px;
  background: #fdfefe;
  box-shadow: 0 0 2px rgba(0,0,0,0.45);
  color: #000;
}

.slide h1 {
  margin: 0 0 60px 7px;
  font-size: 58px;
  line-height: 57px;
  font-weight: 400;
}

.textbox {
  position: relative;
  flex: 1;
  padding: 4px 0 0 10px;
  border: 1px dotted #c4c4c4;
}

.points {
  margin: 0;
  padding: 0;
  list-style: none;
  font-family: Lato, "Noto Sans CJK SC", sans-serif;
  font-size: 36px;
  line-height: 39px;
  white-space: nowrap;
}

.points li {
  display: flex;
  margin-bottom: 13px;
}

.points li::before {
  content: "•";
  width: 22px;
  flex: none;
  font-family: "Liberation Sans", sans-serif;
  font-size: 32px;
}

.points b {
  font-size: 34px;
  font-weight: 400;
}

.points mark {
  padding: 8px 0 0;
  background: #c2c2c2;
  color: #444;
}

.handle {
  position: absolute;
  width: 11px;
  height: 11px;
  margin: -6px;
  border: 1px solid #777;
  border-radius: 50%;
  background: #fff;
}

.tl, .tc, .tr { top: 0; }
.ml, .mr { top: 50%; }
.bl, .bc, .br { top: 100%; }
.tl, .ml, .bl { left: 0; }
.tc, .bc { left: 50%; }
.tr, .mr, .br { left: 100%; }

.rotate {
  position: absolute;
  left: 50%;
  top: -34px;
  width: 18px;
  height: 28px;
  margin-left: -10px;
}

.ibeam {
  position: absolute;
  left: 376px;
  top: 134px;
  width: 10px;
  height: 18px;
}

.v-scroll {
  position: absolute;
  top: 0;
  right: 0;
  bottom: 4px;
  width: 16px;
  display: flex;
  flex-direction: column;
  align-items: center;
  font-size: 6px;
  line-height: 15px;
  color: #777;
}

.v-scroll i {
  width: 7px;
  height: 40px;
  margin: 261px 0 auto;
  border-radius: 4px;
  background: #c8cac9;
}

.notes-pane {
  height: 32px;
  padding: 6px 7px;
  border-top: 1px solid #dbdfde;
  color: #828988;
}

.side-tools {
  width: 54px;
  flex: none;
  display: flex;
  flex-direction: column;
  align-items: center;
  gap: 12px;
  padding-top: 21px;
  border-left: 1px solid #c5caca;
}

.side-tools button {
  flex-direction: column;
  gap: 3px;
  height: 37px;
}

.dash {
  width: 14px;
  height: 1px;
  margin-bottom: 9px;
  background: #98a09f;
}

/* status bar */
.status {
  height: 24px;
  flex: none;
  display: flex;
  align-items: center;
  padding: 0 18px 0 12px;
  border-bottom: 1px solid #a9b0b0;
}

.theme {
  margin-left: 22px;
}

.status-right {
  margin-left: auto;
  display: flex;
  align-items: center;
  gap: 13px;
}

.b-note {
  margin-right: 8px;
}

.b-smart {
  margin-right: 16px;
}

.views {
  display: flex;
  align-items: center;
  gap: 17px;
  margin-left: -5px;
}

.view-on {
  width: 22px;
  height: 22px;
  justify-content: center;
  margin-right: -4px;
  background: #cbcecd;
}

.play-set {
  display: flex;
  align-items: center;
  gap: 8px;
  margin-left: -5px;
}

.play {
  width: 19px;
  height: 18px;
  justify-content: center;
  border-radius: 3px;
  background: #dd671c;
  color: #fff;
  font-size: 9px;
}

.zoom-value {
  gap: 11px;
  margin-left: 4px;
}

.zoom {
  display: flex;
  align-items: center;
  gap: 13px;
  margin-left: 4px;
}

.zoom input {
  appearance: none;
  width: 101px;
  height: 12px;
  background: linear-gradient(90deg, #4078c8 50%, #babdbd 50%) center / 100% 2px no-repeat;
}

.zoom input::-webkit-slider-thumb {
  appearance: none;
  width: 11px;
  height: 11px;
  border: 3px solid #fdfdfd;
  border-radius: 50%;
  background: #777;
}

/* windows 11 taskbar */
.bar11 {
  height: 44px;
  flex: none;
  display: grid;
  grid-template-columns: 1fr auto 1fr;
  align-items: center;
  background: linear-gradient(90deg, #d6e0e6, #dedddc 16%, #dadfdd 28%, #cfdfe6 40%, #d2dde6 60%, #d0dee6 70%, #dbd9da 82%, #dfd7d7 90%, #d8d9db);
}

.weather {
  position: relative;
  display: flex;
  gap: 6px;
  padding-left: 18px;
}

.weather svg {
  width: 24px;
  height: 18px;
  margin-top: 8px;
}

.weather b {
  position: absolute;
  left: 29px;
  top: 0;
  width: 15px;
  height: 15px;
  border-radius: 50%;
  background: #c42b1c;
  color: #fff;
  font-size: 10px;
  line-height: 15px;
  text-align: center;
}

.weather span {
  color: #5a6162;
}

.apps {
  display: flex;
  align-items: center;
  gap: 6px;
}

.apps button {
  position: relative;
  width: 36px;
  height: 36px;
  justify-content: center;
}

.apps .run::after {
  content: "";
  position: absolute;
  bottom: 0;
  width: 6px;
  height: 3px;
  border-radius: 2px;
  background: #7d868b;
}

.apps .focus {
  background: #eaf1f5;
  border-radius: 4px;
}

.apps .focus::after {
  width: 15px;
  background: #1369b5;
}

.search11 {
  width: 206px;
  height: 28px;
  display: flex;
  align-items: center;
  gap: 9px;
  padding-left: 10px;
  border-radius: 14px;
  background: #f0f5f8;
  box-shadow: 0 1px 1px rgba(0,0,0,0.2);
  overflow: hidden;
  font-size: 13px;
}

.search11 input, .search10 input {
  flex: 1;
  min-width: 0;
  outline: none;
}

input::placeholder {
  color: #4c5355;
}

.scene {
  width: 48px;
  height: 21px;
  align-self: flex-end;
}

.tray11 {
  display: flex;
  align-items: center;
  justify-content: flex-end;
  gap: 15px;
  padding-right: 17px;
}

.blue-mic {
  color: #2b62b8;
}

.ime {
  font-size: 15px;
}

.net {
  display: flex;
  gap: 7px;
}

.clock {
  text-align: right;
  margin: 0 -8px 0 -3px;
}

/* windows 10 taskbar */
.bar10 {
  position: relative;
  height: 30px;
  flex: none;
  display: flex;
  align-items: stretch;
  background: #242a29;
  color: #fff;
}

.start {
  width: 37px;
  padding-left: 10px;
}

.search10 {
  width: 257px;
  display: flex;
  align-items: center;
  gap: 12px;
  padding-left: 11px;
  background: #f0f0f0;
  border-bottom: 1px solid #c9c9c9;
  color: #222;
  font-size: 14px;
}

.search10 .scene {
  width: 58px;
  height: 26px;
}

.cell {
  width: 37px;
  justify-content: center;
}

.task {
  width: 157px;
  gap: 4px;
  padding-left: 8px;
  margin: 0 2px;
}

.open {
  border-bottom: 2px solid #76a9d8;
}

.task.current {
  width: 160px;
  background: #4f5654;
}

.tray10 {
  display: flex;
  align-items: center;
  gap: 15px;
  margin-left: auto;
  padding-right: 19px;
  margin-right: 4px;
  border-right: 1px solid #6b6f6e;
}

.tray10 > :first-child {
  margin-right: 10px;
}

.cursor {
  position: absolute;
  left: 1346px;
  top: 20px;
  width: 12px;
  height: 18px;
}
```
